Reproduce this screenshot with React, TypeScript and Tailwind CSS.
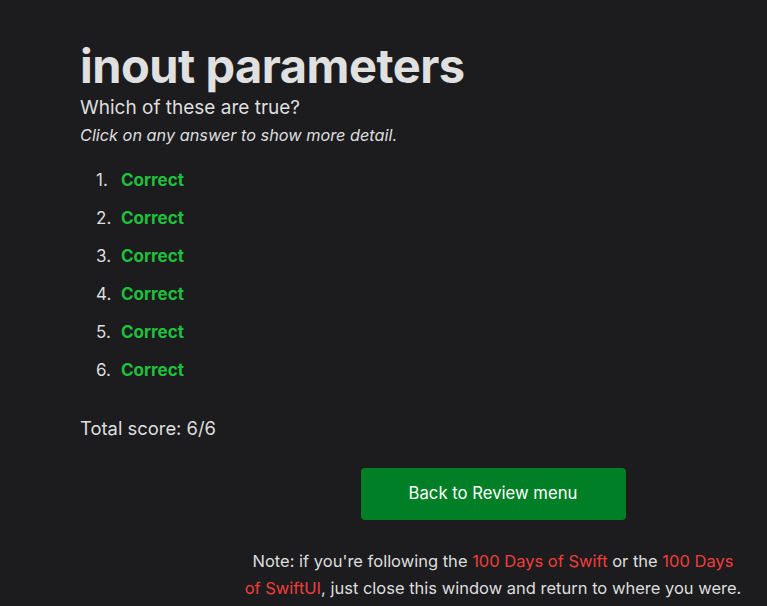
export default function App() {
  const items = [1, 2, 3, 4, 5, 6];
  return (
    <div
      className="min-h-[606px] w-full bg-[#1c1c1e] text-[#dedede] overflow-hidden"
      style={{ fontFamily: "Inter, 'Noto Sans', sans-serif" }}
    >
      <div className="pl-[80px] pt-[38px]">
        <h1 className="text-[47px] font-bold leading-[56px] tracking-[-0.5px] text-[#e0e0e0]">
          inout parameters
        </h1>
        <p className="text-[19px] leading-[26px] mt-[1px]">Which of these are true?</p>
        <p className="text-[16.3px] italic leading-[24px] mt-[2px]">
          Click on any answer to show more detail.
        </p>
        <ol className="mt-[21px] flex flex-col gap-[14px]">
          {items.map((n) => (
            <li key={n} className="flex items-center text-[17px] leading-[24px]">
              <span className="w-[41px] pl-[16px]">{n}.</span>
              <span className="font-bold text-[#1ec03c]">Correct</span>
            </li>
          ))}
        </ol>
        <p className="text-[18.4px] leading-[26px] mt-[33px]">Total score: 6/6</p>
      </div>
      <div className="ml-[243px] w-[500px] flex flex-col items-center mt-[27px]">
        <button className="w-[265px] h-[52px] rounded-[4px] bg-[#007f26] text-white text-[16.7px]">
          Back to Review menu
        </button>
        <p className="text-center text-[16.5px] leading-[27px] mt-[28px]">
          Note: if you're following the{" "}
          <span className="text-[#f23c3c]">100 Days of Swift</span> or the{" "}
          <span className="text-[#f23c3c]">100 Days of SwiftUI</span>, just close this window and
          return to where you were.
        </p>
      </div>
    </div>
  );
}
